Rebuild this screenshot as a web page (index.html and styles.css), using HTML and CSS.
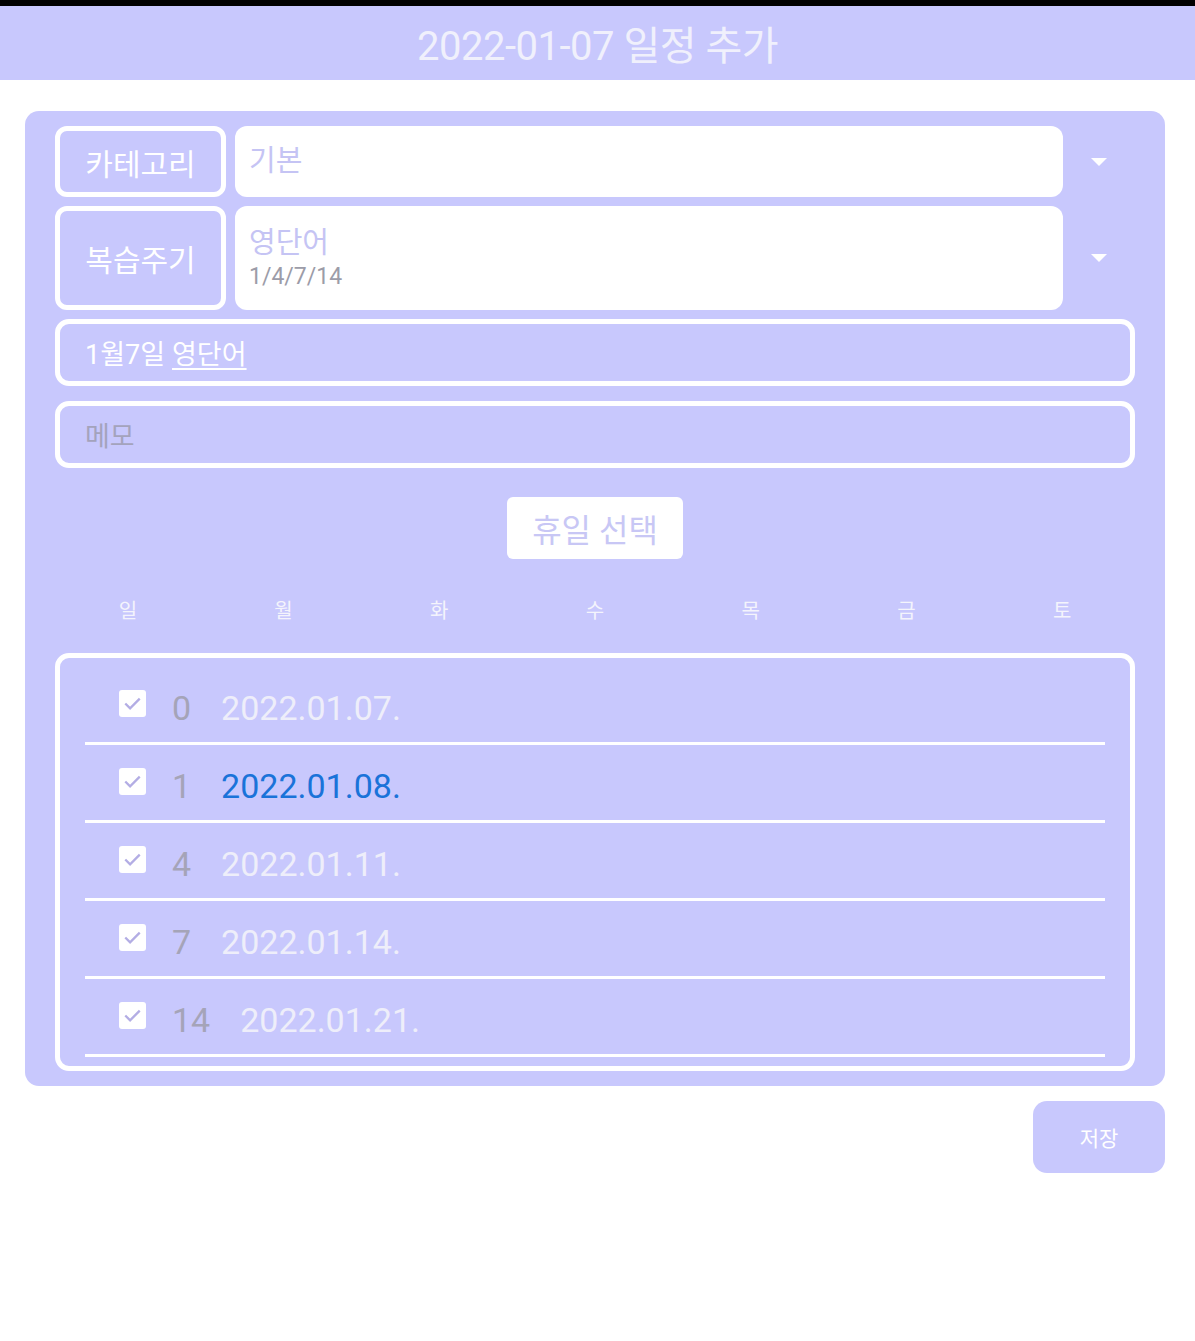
FILE: index.html
```html
<!DOCTYPE html>
<html lang="ko">
<head>
  <meta charset="UTF-8" />
  <meta name="viewport" content="width=device-width, initial-scale=1" />
  <title>일정 추가</title>
  <link rel="stylesheet" href="styles.css">
</head>
<body>

  <div class="status-bar"></div>

  <header class="app-header">
    <h1>2022-01-07 일정 추가</h1>
  </header>

  <main class="page">
    <section class="form-card">

      <div class="field-row">
        <div class="field-label">카테고리</div>
        <div class="field-select">
          <span class="select-main">기본</span>
        </div>
        <div class="select-arrow"><span class="arrow"></span></div>
      </div>

      <div class="field-row tall">
        <div class="field-label">복습주기</div>
        <div class="field-select">
          <span class="select-main">영단어</span>
          <span class="select-sub">1/4/7/14</span>
        </div>
        <div class="select-arrow"><span class="arrow"></span></div>
      </div>

      <div class="text-box title-box">1월7일 <u>영단어</u></div>
      <div class="text-box memo-box">메모</div>

      <div class="holiday-wrap">
        <button class="holiday-btn">휴일 선택</button>
      </div>

      <div class="weekdays">
        <span>일</span><span>월</span><span>화</span><span>수</span><span>목</span><span>금</span><span>토</span>
      </div>

      <ul class="review-list">
        <li class="review-item">
          <span class="check"><svg viewBox="0 0 28 28"><path d="M6.5 14l5 5L21.5 9" /></svg></span>
          <span class="offset">0</span>
          <span class="date">2022.01.07.</span>
        </li>
        <li class="review-item">
          <span class="check"><svg viewBox="0 0 28 28"><path d="M6.5 14l5 5L21.5 9" /></svg></span>
          <span class="offset">1</span>
          <span class="date today">2022.01.08.</span>
        </li>
        <li class="review-item">
          <span class="check"><svg viewBox="0 0 28 28"><path d="M6.5 14l5 5L21.5 9" /></svg></span>
          <span class="offset">4</span>
          <span class="date">2022.01.11.</span>
        </li>
        <li class="review-item">
          <span class="check"><svg viewBox="0 0 28 28"><path d="M6.5 14l5 5L21.5 9" /></svg></span>
          <span class="offset">7</span>
          <span class="date">2022.01.14.</span>
        </li>
        <li class="review-item">
          <span class="check"><svg viewBox="0 0 28 28"><path d="M6.5 14l5 5L21.5 9" /></svg></span>
          <span class="offset">14</span>
          <span class="date">2022.01.21.</span>
        </li>
      </ul>

    </section>

    <div class="save-row">
      <button class="save-btn">저장</button>
    </div>
  </main>

</body>
</html>
```

FILE: styles.css
```css
* {
  box-sizing: border-box;
}
body {
  margin: 0;
  background: #fff;
  font-family: Roboto, "Noto Sans CJK KR", sans-serif;
  color: #fff;
}

.status-bar {
  height: 6px;
  background: #000;
}

.app-header {
  height: 74px;
  background: #c8c8fd;
  display: flex;
  align-items: center;
  justify-content: center;
}
.app-header h1 {
  margin: 0;
  font-size: 40px;
  font-weight: 400;
  color: #f0f0fc;
  letter-spacing: -0.5px;
}

.page {
  padding: 31px 30px 0 25px;
}

.form-card {
  background: #c8c8fd;
  border-radius: 14px;
  padding: 15px 30px 15px 30px;
}

/* select rows */
.field-row {
  display: grid;
  grid-template-columns: 171px 828px 1fr;
  column-gap: 9px;
  height: 71px;
  margin-bottom: 9px;
}
.field-row.tall {
  height: 104px;
}
.field-label {
  border: 5px solid #fff;
  border-radius: 12px;
  display: flex;
  align-items: center;
  justify-content: center;
  font-size: 30px;
  color: #fff;
}
.field-select {
  background: #fff;
  border-radius: 12px;
  padding: 0 14px;
  display: flex;
  flex-direction: column;
  justify-content: center;
}
.select-main {
  font-size: 29px;
  color: #c5c4f4;
  line-height: 1.2;
}
.select-sub {
  font-size: 23px;
  color: #9c9ca8;
  margin-top: 2px;
}
.select-arrow {
  display: flex;
  align-items: center;
  justify-content: center;
  padding-right: 9px;
}
.arrow {
  width: 0;
  height: 0;
  border-left: 8px solid transparent;
  border-right: 8px solid transparent;
  border-top: 8px solid #fff;
}

/* text inputs */
.text-box {
  border: 5px solid #fff;
  border-radius: 14px;
  height: 67px;
  padding: 0 25px;
  display: flex;
  align-items: center;
  gap: 7px;
  font-size: 27px;
}
.title-box {
  color: #fff;
  margin-bottom: 15px;
}
.title-box u {
  text-decoration-thickness: 2px;
  text-underline-offset: 4px;
}
.memo-box {
  color: #a4a3bc;
}

.holiday-wrap {
  display: flex;
  justify-content: center;
  margin-top: 29px;
}
.holiday-btn {
  background: #fff;
  border: none;
  border-radius: 6px;
  width: 176px;
  height: 62px;
  font-family: inherit;
  font-size: 32px;
  color: #c8c7f5;
  padding: 0;
}

.weekdays {
  display: grid;
  grid-template-columns: repeat(7, 1fr);
  margin: 0 -5px;
  padding-top: 36px;
  height: 94px;
  font-size: 20px;
  color: #f4f4fc;
  text-align: center;
}

/* review list */
.review-list {
  list-style: none;
  margin: 0;
  border: 5px solid #fff;
  border-radius: 14px;
  padding: 9px 25px 9px;
}
.review-item {
  height: 78px;
  border-bottom: 3px solid #fff;
  display: flex;
  align-items: center;
  padding-left: 34px;
  padding-top: 6px;
  font-size: 34px;
}
.check {
  width: 27px;
  height: 27px;
  background: #fff;
  border-radius: 3px;
  margin-right: 26px;
  margin-top: -8px;
  display: flex;
}
.check svg {
  width: 27px;
  height: 27px;
  fill: none;
  stroke: #b3ade4;
  stroke-width: 2.4;
}
.offset {
  color: #a5a4b8;
  margin-right: 30px;
}
.date {
  color: #eeeefa;
}
.date.today {
  color: #1a73d9;
}

.save-row {
  display: flex;
  justify-content: flex-end;
  padding-top: 15px;
}
.save-btn {
  width: 132px;
  height: 72px;
  border: none;
  border-radius: 14px;
  background: #c8c8fd;
  color: #fff;
  font-family: inherit;
  font-size: 21px;
}
```
